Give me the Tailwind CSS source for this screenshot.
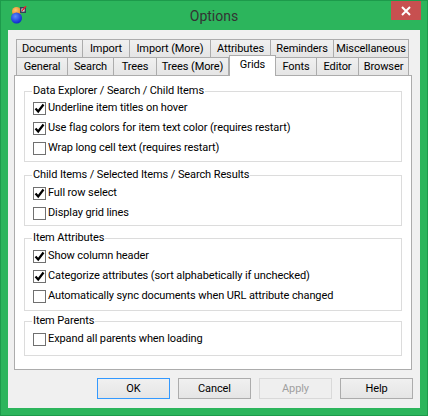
<!DOCTYPE html>
<html lang="en">
<head>
  <meta charset="UTF-8" />
  <title>Options</title>
  <script src="https://cdn.jsdelivr.net/npm/@tailwindcss/browser@4"></script>
</head>
<body class="overflow-hidden">
  <div class="relative w-[428px] h-[416px] bg-[#2cb55c] border border-[#1d9a4b] flex flex-col font-['Roboto',sans-serif] text-[11px] tracking-[-0.1px] leading-[16px] text-black">

    <!-- title bar -->
    <div class="relative h-[29px] shrink-0 flex items-center justify-center">
      <svg class="absolute left-[9px] top-[5px]" width="18" height="18" viewBox="0 0 18 18">
        <defs>
          <radialGradient id="orange" cx="0.4" cy="0.35" r="0.7"><stop offset="0" stop-color="#ffc56e"/><stop offset="1" stop-color="#e5801c"/></radialGradient>
          <radialGradient id="blue" cx="0.4" cy="0.35" r="0.7"><stop offset="0" stop-color="#5a8cff"/><stop offset="1" stop-color="#0a22c8"/></radialGradient>
        </defs>
        <circle cx="6.5" cy="5.5" r="4.5" fill="url(#orange)"/>
        <circle cx="6.5" cy="12" r="5.5" fill="url(#blue)"/>
        <rect x="10" y="1" width="6" height="6" fill="#33415c"/>
        <rect x="11.5" y="2.5" width="3" height="3" fill="#fff"/>
        <path d="M12 5 L16 0" stroke="#e5262c" stroke-width="1.5"/>
      </svg>
      <span class="text-[14px] tracking-normal text-[#333]">Options</span>
      <div class="absolute right-[6px] top-0 w-[30px] h-[19px] bg-[#c75050] flex items-center justify-center">
        <svg width="10" height="10" viewBox="0 0 10 10"><path d="M1 1 L9 9 M9 1 L1 9" stroke="#fff" stroke-width="2"/></svg>
      </div>
    </div>

    <!-- client area -->
    <div class="mx-[7px] h-[378px] bg-[#f0f0f0] pt-[9px] px-[6px]">
      <!-- tabs -->
      <div class="relative h-[36px] ml-[2px]">
        <div class="flex h-[18px]">
          <div class="w-[67px] h-[18px] border border-b-0 border-[#acacac] bg-linear-to-b from-[#f0f0f0] to-[#e5e5e5] flex items-center justify-center">Documents</div>
          <div class="w-[47px] h-[18px] border border-l-0 border-b-0 border-[#acacac] bg-linear-to-b from-[#f0f0f0] to-[#e5e5e5] flex items-center justify-center">Import</div>
          <div class="w-[81px] h-[18px] border border-l-0 border-b-0 border-[#acacac] bg-linear-to-b from-[#f0f0f0] to-[#e5e5e5] flex items-center justify-center">Import (More)</div>
          <div class="w-[60px] h-[18px] border border-l-0 border-b-0 border-[#acacac] bg-linear-to-b from-[#f0f0f0] to-[#e5e5e5] flex items-center justify-center">Attributes</div>
          <div class="w-[63px] h-[18px] border border-l-0 border-b-0 border-[#acacac] bg-linear-to-b from-[#f0f0f0] to-[#e5e5e5] flex items-center justify-center">Reminders</div>
          <div class="w-[75px] h-[18px] border border-l-0 border-b-0 border-[#acacac] bg-linear-to-b from-[#f0f0f0] to-[#e5e5e5] flex items-center justify-center">Miscellaneous</div>
        </div>
        <div class="flex h-[18px]">
          <div class="w-[52px] h-[18px] border border-b-0 border-[#acacac] bg-linear-to-b from-[#f0f0f0] to-[#e5e5e5] flex items-center justify-center">General</div>
          <div class="w-[46px] h-[18px] border border-l-0 border-b-0 border-[#acacac] bg-linear-to-b from-[#f0f0f0] to-[#e5e5e5] flex items-center justify-center">Search</div>
          <div class="w-[43px] h-[18px] border border-l-0 border-b-0 border-[#acacac] bg-linear-to-b from-[#f0f0f0] to-[#e5e5e5] flex items-center justify-center">Trees</div>
          <div class="w-[72px] h-[18px] border border-l-0 border-b-0 border-[#acacac] bg-linear-to-b from-[#f0f0f0] to-[#e5e5e5] flex items-center justify-center">Trees (More)</div>
          <div class="relative z-10 w-[47px] h-[21px] -mt-[2px] border border-b-0 border-[#acacac] bg-white flex items-start justify-center pt-[1px]">Grids</div>
          <div class="w-[41px] h-[18px] border border-l-0 border-b-0 border-[#acacac] bg-linear-to-b from-[#f0f0f0] to-[#e5e5e5] flex items-center justify-center">Fonts</div>
          <div class="w-[42px] h-[18px] border border-l-0 border-b-0 border-[#acacac] bg-linear-to-b from-[#f0f0f0] to-[#e5e5e5] flex items-center justify-center">Editor</div>
          <div class="w-[50px] h-[18px] border border-l-0 border-b-0 border-[#acacac] bg-linear-to-b from-[#f0f0f0] to-[#e5e5e5] flex items-center justify-center">Browser</div>
        </div>
      </div>

      <!-- tab page -->
      <div class="w-[398px] h-[295px] bg-white border border-[#acacac] pt-[7px] px-[9px]">
        <fieldset class="h-[79px] border border-[#dcdcdc] px-[8px]">
          <legend class="-ml-[1px] px-[1px]">Data Explorer / Search / Child Items</legend>
          <div class="flex flex-col gap-[4px] mt-[1px]">
            <label class="flex items-center gap-[2px] h-[16px]">
              <span class="w-[13px] h-[13px] border border-[#707070] flex items-center justify-center"><svg width="11" height="11" viewBox="0 0 11 11"><path d="M1.5 5.5 L4.2 8.5 L9.5 1.5" fill="none" stroke="#000" stroke-width="2.2"/></svg></span>
              Underline item titles on hover
            </label>
            <label class="flex items-center gap-[2px] h-[16px]">
              <span class="w-[13px] h-[13px] border border-[#707070] flex items-center justify-center"><svg width="11" height="11" viewBox="0 0 11 11"><path d="M1.5 5.5 L4.2 8.5 L9.5 1.5" fill="none" stroke="#000" stroke-width="2.2"/></svg></span>
              Use flag colors for item text color (requires restart)
            </label>
            <label class="flex items-center gap-[2px] h-[16px]">
              <span class="w-[13px] h-[13px] border border-[#707070]"></span>
              Wrap long cell text (requires restart)
            </label>
          </div>
        </fieldset>

        <fieldset class="h-[59px] mt-[5px] border border-[#dcdcdc] px-[8px]">
          <legend class="-ml-[1px] px-[1px]">Child Items / Selected Items / Search Results</legend>
          <div class="flex flex-col gap-[4px] mt-[2px]">
            <label class="flex items-center gap-[2px] h-[16px]">
              <span class="w-[13px] h-[13px] border border-[#707070] flex items-center justify-center"><svg width="11" height="11" viewBox="0 0 11 11"><path d="M1.5 5.5 L4.2 8.5 L9.5 1.5" fill="none" stroke="#000" stroke-width="2.2"/></svg></span>
              Full row select
            </label>
            <label class="flex items-center gap-[2px] h-[16px]">
              <span class="w-[13px] h-[13px] border border-[#707070]"></span>
              Display grid lines
            </label>
          </div>
        </fieldset>

        <fieldset class="h-[81px] mt-[4px] border border-[#dcdcdc] px-[8px]">
          <legend class="-ml-[1px] px-[1px]">Item Attributes</legend>
          <div class="flex flex-col gap-[4px] mt-[2px]">
            <label class="flex items-center gap-[2px] h-[16px]">
              <span class="w-[13px] h-[13px] border border-[#707070] flex items-center justify-center"><svg width="11" height="11" viewBox="0 0 11 11"><path d="M1.5 5.5 L4.2 8.5 L9.5 1.5" fill="none" stroke="#000" stroke-width="2.2"/></svg></span>
              Show column header
            </label>
            <label class="flex items-center gap-[2px] h-[16px]">
              <span class="w-[13px] h-[13px] border border-[#707070] flex items-center justify-center"><svg width="11" height="11" viewBox="0 0 11 11"><path d="M1.5 5.5 L4.2 8.5 L9.5 1.5" fill="none" stroke="#000" stroke-width="2.2"/></svg></span>
              Categorize attributes (sort alphabetically if unchecked)
            </label>
            <label class="flex items-center gap-[2px] h-[16px]">
              <span class="w-[13px] h-[13px] border border-[#707070]"></span>
              Automatically sync documents when URL attribute changed
            </label>
          </div>
        </fieldset>

        <fieldset class="h-[43px] mt-[2px] border border-[#dcdcdc] px-[8px]">
          <legend class="-ml-[1px] px-[1px]">Item Parents</legend>
          <label class="flex items-center gap-[2px] h-[16px] mt-[2px]">
            <span class="w-[13px] h-[13px] border border-[#707070]"></span>
            Expand all parents when loading
          </label>
        </fieldset>
      </div>

      <!-- buttons -->
      <div class="flex justify-end gap-[8px] mt-[8px] pr-[1px]">
        <button class="w-[73px] h-[21px] border border-[#3399ff] bg-linear-to-b from-[#f0f0f0] to-[#e5e5e5]">OK</button>
        <button class="w-[73px] h-[21px] border border-[#acacac] bg-linear-to-b from-[#f0f0f0] to-[#e5e5e5]">Cancel</button>
        <button class="w-[73px] h-[21px] border border-[#d9d9d9] bg-[#efefef] text-[#a0a0a0]">Apply</button>
        <button class="w-[73px] h-[21px] border border-[#acacac] bg-linear-to-b from-[#f0f0f0] to-[#e5e5e5]">Help</button>
      </div>
    </div>
  </div>
</body>
</html>
